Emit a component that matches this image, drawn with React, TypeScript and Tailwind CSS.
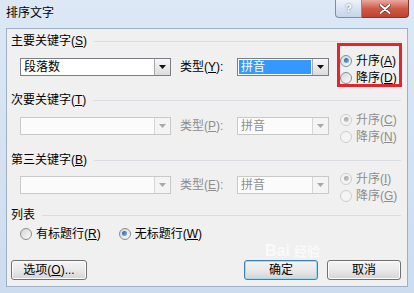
import React from "react";

const font = "font-['Liberation_Sans','Noto_Sans_CJK_SC',sans-serif]";

function Arrow({ disabled }: { disabled?: boolean }) {
  return (
    <svg width="7" height="4" viewBox="0 0 7 4">
      <polygon points="0,0 7,0 3.5,4" fill={disabled ? "#a8a8a8" : "#111"} />
    </svg>
  );
}

function Combo({
  width,
  text,
  disabled,
  selected,
}: {
  width: string;
  text: string;
  disabled?: boolean;
  selected?: boolean;
}) {
  return (
    <div
      className={
        "flex h-[18px] shrink-0 border " +
        width +
        (disabled ? " border-[#c9c9c9] bg-[#fbfbfb]" : " border-[#7b7e84] bg-white")
      }
    >
      <div className="flex flex-1 items-center p-[1px]">
        <div
          className={
            "flex h-full flex-1 items-center pl-[2px] leading-none " +
            (selected ? "bg-[#3399ff] text-white" : disabled ? "text-[#8d8d8d]" : "text-black")
          }
        >
          {text}
        </div>
      </div>
      <div
        className={
          "flex w-[16px] items-center justify-center border-l " +
          (disabled
            ? "border-[#d6d6d6] bg-[#f4f4f4]"
            : "border-[#a9a9a9] bg-gradient-to-b from-[#f7f7f7] to-[#dcdcdc]")
        }
      >
        <Arrow disabled={disabled} />
      </div>
    </div>
  );
}

function Radio({
  label,
  checked,
  disabled,
}: {
  label: React.ReactNode;
  checked?: boolean;
  disabled?: boolean;
}) {
  return (
    <div className="flex h-[17px] items-center gap-[4px] whitespace-nowrap">
      <span
        className={
          "relative h-[12px] w-[12px] shrink-0 rounded-full border " +
          (disabled
            ? "border-[#cdcdcd] bg-[#f4f4f4]"
            : "border-[#8a8c8e] bg-gradient-to-br from-[#d6d6d6] to-[#fafafa]")
        }
      >
        {checked && (
          <span
            className={
              "absolute inset-[2.5px] rounded-full " +
              (disabled
                ? "bg-gradient-to-br from-[#9a9a9a] to-[#d8d8d8]"
                : "bg-gradient-to-br from-[#1d5b9a] to-[#7fc1ef]")
            }
          />
        )}
      </span>
      <span className={disabled ? "text-[#8d8d8d]" : "text-black"}>{label}</span>
    </div>
  );
}

function Heading({ children, mt }: { children: React.ReactNode; mt: string }) {
  return (
    <div className={"flex h-[16px] items-center pl-[4px] pr-[6px] " + mt}>
      <span className="whitespace-nowrap">{children}</span>
      <div className="ml-[7px] h-0 flex-1 border-t border-[#d9dde2]" />
    </div>
  );
}

function KeyRow({
  mt,
  first,
  typeLabel,
  disabled,
  up,
  down,
}: {
  mt: string;
  first: string;
  typeLabel: React.ReactNode;
  disabled?: boolean;
  up: React.ReactNode;
  down: React.ReactNode;
}) {
  return (
    <div className={"flex h-[18px] items-start pl-[13px] " + mt}>
      <Combo width="w-[151px]" text={first} disabled={disabled} />
      <div
        className={
          "ml-[9px] flex h-[18px] w-[57px] items-center whitespace-nowrap " +
          (disabled ? "text-[#8d8d8d]" : "text-black")
        }
      >
        {typeLabel}
      </div>
      <Combo width="w-[92px]" text="拼音" disabled={disabled} selected={!disabled} />
      <div className="ml-[11px] mt-[-6px] flex flex-col">
        <Radio label={up} checked disabled={disabled} />
        <Radio label={down} disabled={disabled} />
      </div>
    </div>
  );
}

function Button({
  children,
  width,
  primary,
}: {
  children: React.ReactNode;
  width: string;
  primary?: boolean;
}) {
  return (
    <div
      className={
        "flex h-[20px] items-center justify-center rounded-[3px] border bg-gradient-to-b from-[#f4f4f4] via-[#e9e9e9] to-[#d4d4d4] " +
        width +
        (primary
          ? " border-[#3c7fb1] shadow-[inset_0_0_0_1px_#9fdcf7]"
          : " border-[#707070] shadow-[inset_0_0_0_1px_#fcfcfc]")
      }
    >
      {children}
    </div>
  );
}

const u = (c: string) => (
  <>
    (<span className="underline">{c}</span>)
  </>
);

export default function App() {
  return (
    <div
      className={
        "flex h-[293px] w-[414px] flex-col bg-gradient-to-b from-[#dce8f5] to-[#cddcee] text-[12px] text-black " +
        font
      }
    >
      <div className="flex h-[28px] shrink-0 items-start">
        <div className="ml-[6px] mt-[5px] text-[12px] leading-[16px]">排序文字</div>
        <div className="ml-auto mr-[5px] flex">
          <div className="flex h-[18px] w-[27px] items-center justify-center rounded-bl-[4px] border border-t-0 border-[#7b8ea8] bg-gradient-to-b from-[#eef3f9] to-[#c6d5e8] text-[11px] font-bold leading-none text-white [text-shadow:0_0_2px_#55667e]">
            ?
          </div>
          <div className="flex h-[18px] w-[47px] items-center justify-center rounded-br-[4px] border border-l-0 border-t-0 border-[#7a3b36] bg-gradient-to-b from-[#e8a99f] via-[#cd5a48] to-[#c0412f]">
            <svg width="12" height="10" viewBox="0 0 12 10">
              <path d="M1.5 1 L10.5 9 M10.5 1 L1.5 9" stroke="#5a2019" strokeWidth="3.2" strokeLinecap="round" />
              <path d="M1.5 1 L10.5 9 M10.5 1 L1.5 9" stroke="#fff" strokeWidth="2" strokeLinecap="round" />
            </svg>
          </div>
        </div>
      </div>

      <div className="relative mx-[6px] flex h-[259px] shrink-0 flex-col border border-[#9fb0c4] bg-[#f0f0f0] leading-[16px]">
        <Heading mt="mt-[4px]">主要关键字{u("S")}</Heading>
        <KeyRow mt="mt-[9px]" first="段落数" typeLabel={<>类型{u("Y")}:</>} up={<>升序{u("A")}</>} down={<>降序{u("D")}</>} />

        <Heading mt="mt-[16px]">次要关键字{u("T")}</Heading>
        <KeyRow mt="mt-[9px]" first="" disabled typeLabel={<>类型{u("P")}:</>} up={<>升序{u("C")}</>} down={<>降序{u("N")}</>} />

        <Heading mt="mt-[17px]">第三关键字{u("B")}</Heading>
        <KeyRow mt="mt-[8px]" first="" disabled typeLabel={<>类型{u("E")}:</>} up={<>升序{u("I")}</>} down={<>降序{u("G")}</>} />

        <Heading mt="mt-[13px]">列表</Heading>
        <div className="ml-[13px] mt-[2px] flex gap-[18px]">
          <Radio label={<>有标题行{u("R")}</>} />
          <Radio label={<>无标题行{u("W")}</>} checked />
        </div>

        <div className="mt-[18px] flex pl-[4px] pr-[6px]">
          <Button width="w-[76px]">选项{u("O")}...</Button>
          <div className="ml-auto flex gap-[9px]">
            <Button width="w-[74px]" primary>
              确定
            </Button>
            <Button width="w-[74px]">取消</Button>
          </div>
        </div>

        <div className="pointer-events-none absolute left-[330px] top-[14px] h-[44px] w-[65px] border-[3px] border-[#e3262d]" />
        <div className="pointer-events-none absolute left-[258px] top-[214px] flex items-center gap-[4px] text-[16px] font-bold leading-none text-white/70">
          <span>Bai</span>
          <span className="text-[13px]">经验</span>
        </div>
      </div>
    </div>
  );
}
